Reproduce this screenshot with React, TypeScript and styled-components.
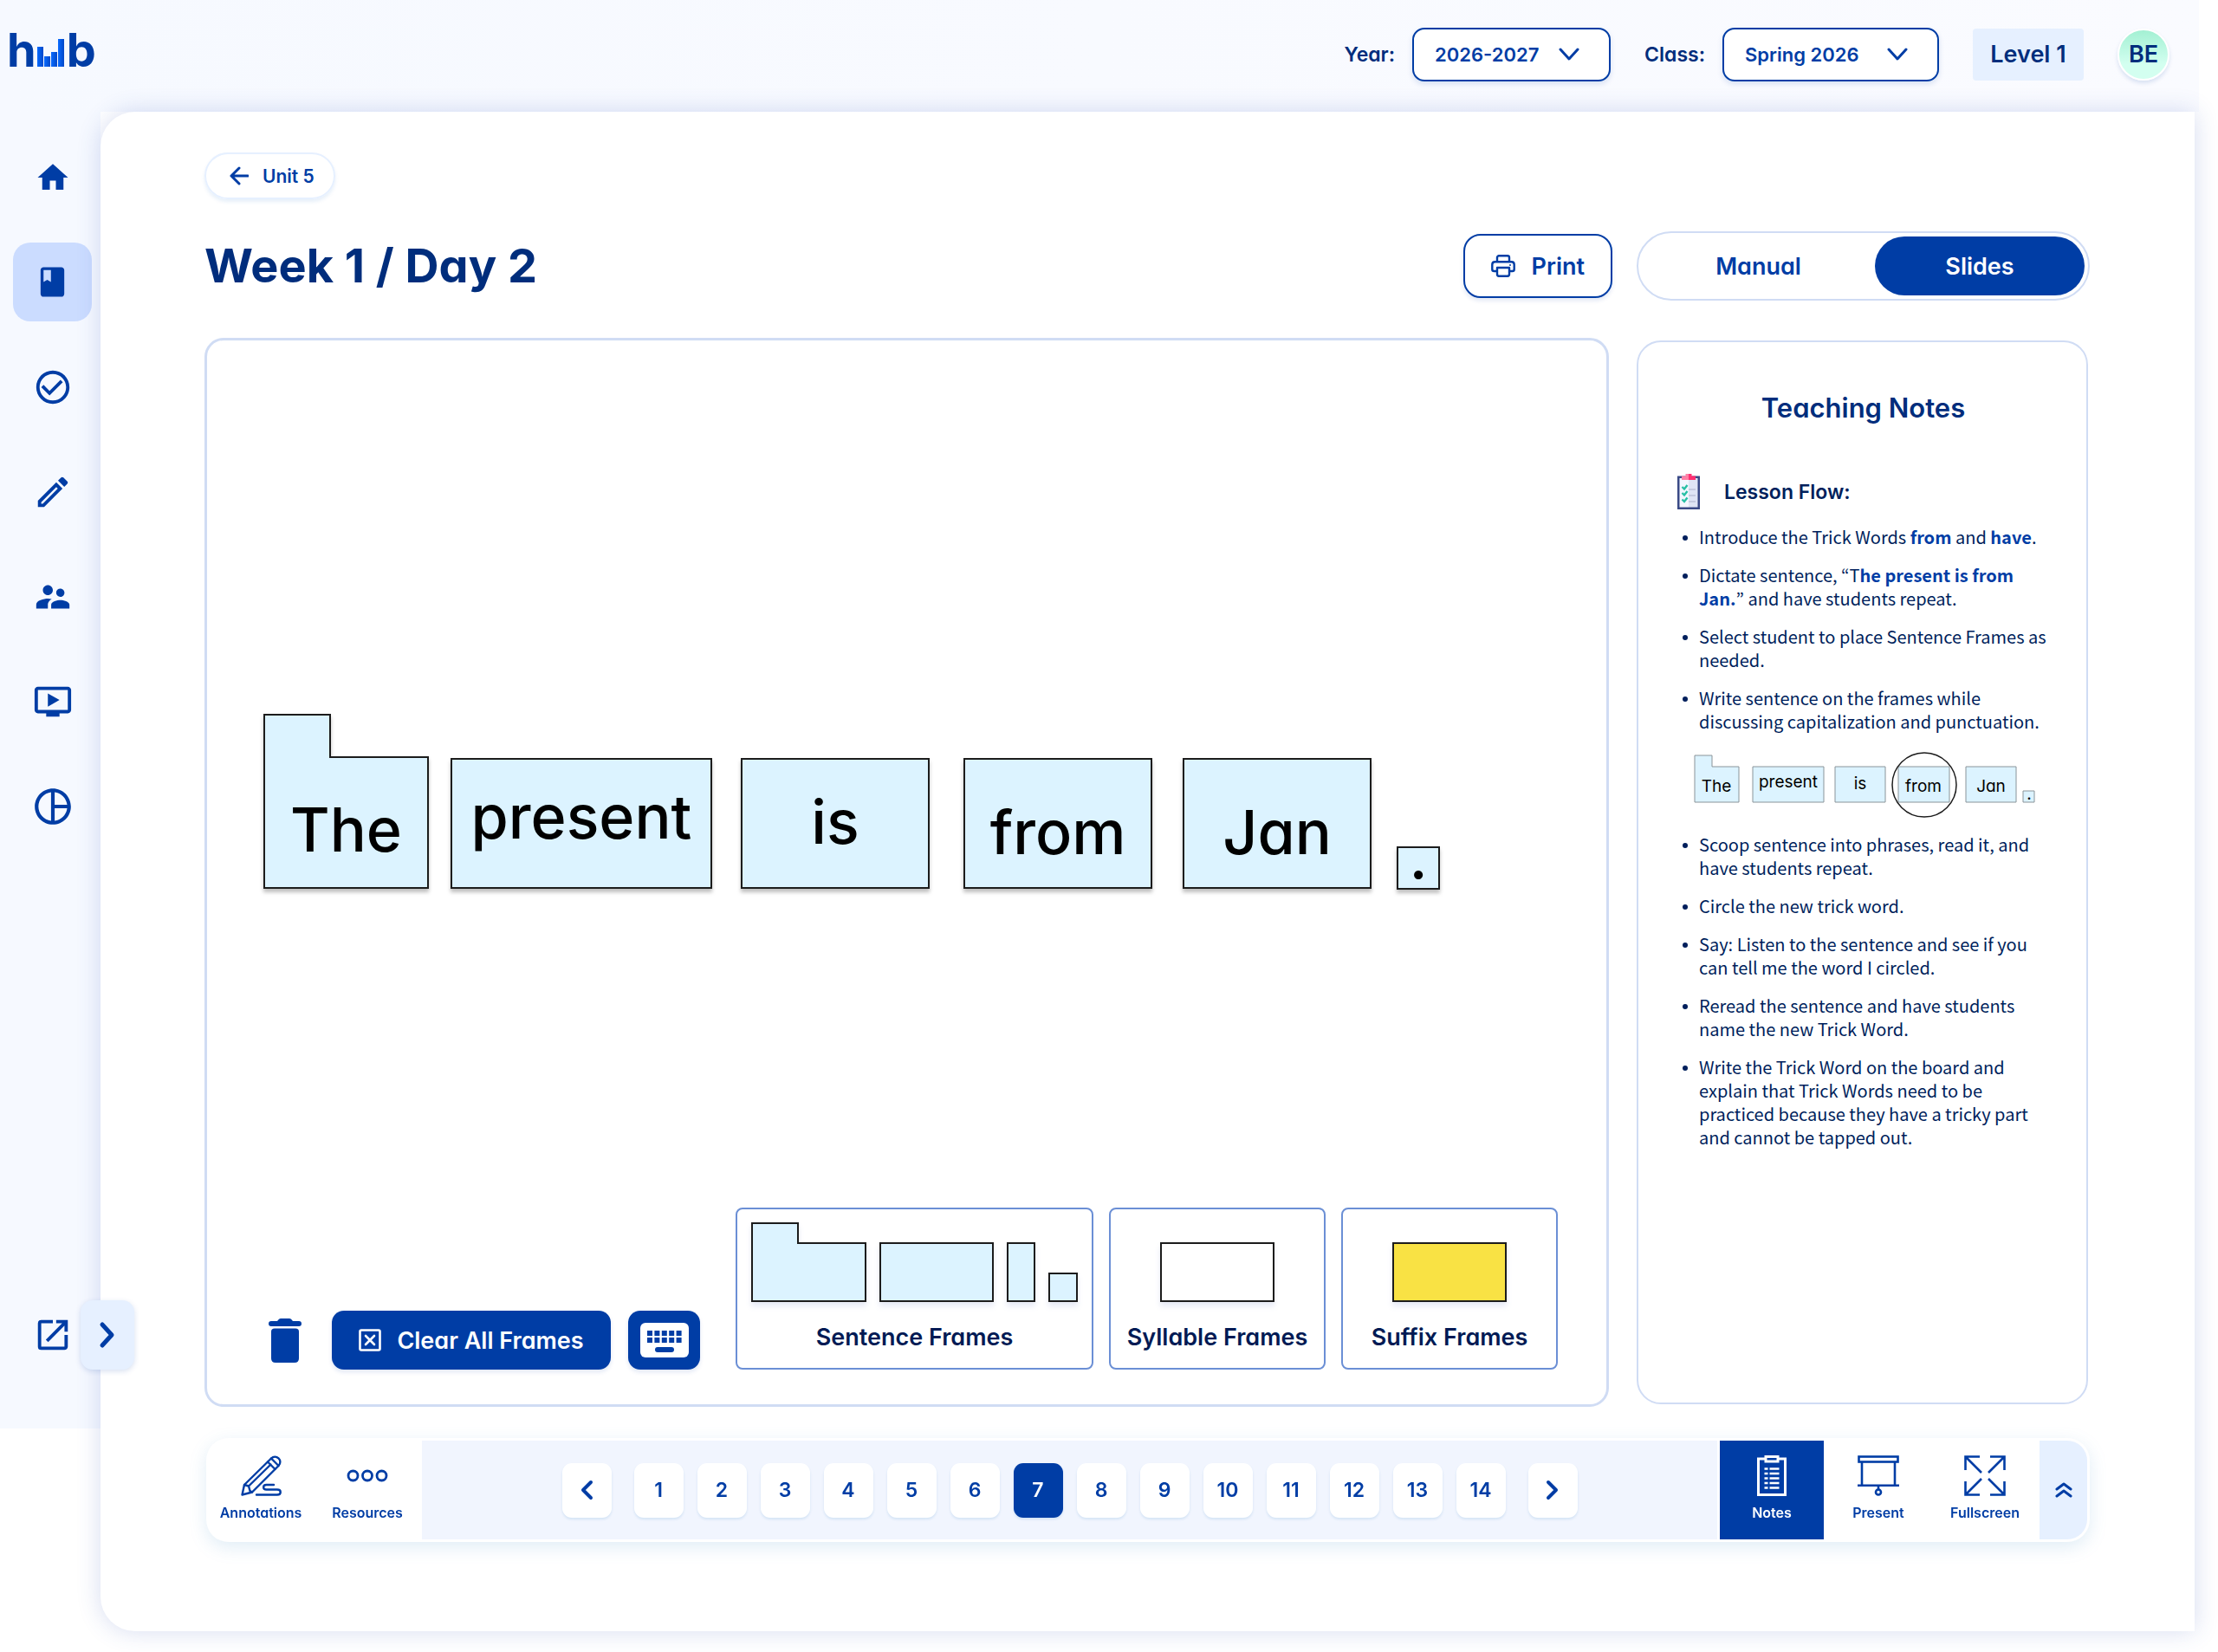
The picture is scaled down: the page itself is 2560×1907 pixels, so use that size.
import React, { useState } from "react";
import styled, { createGlobalStyle } from "styled-components";
import {
  MdHome,
  MdBook,
  MdCheckCircleOutline,
  MdOutlineModeEdit,
  MdSupervisorAccount,
  MdOutlineOndemandVideo,
  MdOutlinePieChart,
  MdOpenInNew,
} from "react-icons/md";

const color = {
  primary: "#003da5",
  navy: "#002d7c",
  ink: "#001f5c",
  tint: "#e6f0ff",
  line: "#d0dcf4",
  frame: "#dcf3ff",
  frameLine: "#1c1c1c",
};

const display = `Inter, "Open Sans", sans-serif`;

const GlobalStyle = createGlobalStyle`
  *, *::before, *::after { box-sizing: border-box; }
  body {
    margin: 0;
    background: #fff;
    color: ${color.ink};
    font-family: ${display};
    font-feature-settings: "cv11" 1;
  }
  button, select {
    font-family: inherit;
    font-feature-settings: inherit;
    cursor: pointer;
  }
  svg { display: block; }
  h1, h2, h3, p, ul { margin: 0; padding: 0; }
`;

const Page = styled.div`
  display: flex;
  flex-direction: column;
  min-height: 100vh;
  padding: 0 22px 24px 0;
`;

/* ---------- header ---------- */

const Header = styled.header`
  display: flex;
  align-items: center;
  justify-content: space-between;
  height: 129px;
  padding: 0 34px 4px 8px;
  background: linear-gradient(90deg, #f6f9ff, #fafbff);
`;

const Logo = styled.a`
  display: flex;
  align-items: flex-end;
  padding-bottom: 10px;
  color: ${color.primary};
  font-size: 54px;
  font-weight: 700;
  line-height: 54px;
  text-decoration: none;

  svg { margin-bottom: 8px; }
`;

const HeaderTools = styled.div`
  display: flex;
  align-items: center;
  gap: 39px;
`;

const Field = styled.div`
  display: flex;
  align-items: center;
  gap: 20px;
`;

const FieldLabel = styled.label`
  color: ${color.navy};
  font-size: 23px;
  font-weight: 600;
`;

const SelectBox = styled.div<{ $width: number }>`
  position: relative;
  width: ${(p) => p.$width}px;

  svg {
    position: absolute;
    top: 23px;
    right: 36px;
    pointer-events: none;
  }
`;

const Select = styled.select`
  width: 100%;
  height: 62px;
  padding: 0 24px;
  border: 2px solid ${color.primary};
  border-radius: 14px;
  background: #fff;
  box-shadow: 0 3px 6px rgba(0, 61, 165, 0.14);
  color: ${color.primary};
  font-size: 22px;
  font-weight: 600;
  appearance: none;
`;

const Level = styled.span`
  min-width: 128px;
  border-radius: 4px;
  background: ${color.tint};
  color: ${color.navy};
  font-size: 27px;
  font-weight: 600;
  line-height: 60px;
  text-align: center;
`;

const Avatar = styled.button`
  width: 60px;
  height: 60px;
  padding: 0;
  border: 2px solid #fff;
  border-radius: 50%;
  background: linear-gradient(#a3f0d3, #d3fff0 70%);
  box-shadow: 0 3px 5px rgba(0, 61, 165, 0.14);
  color: ${color.navy};
  font-size: 27px;
  font-weight: 600;
`;

/* ---------- shell ---------- */

const Shell = styled.div`
  display: grid;
  grid-template-columns: 116px minmax(0, 1fr);
  flex: 1;
`;

const Sidebar = styled.aside`
  position: relative;
  display: flex;
  flex-direction: column;
  justify-content: space-between;
  align-self: start;
  height: 1520px;
  max-height: 100%;
  padding: 30px 10px 63px 15px;
  background: #f6f9ff;
`;

const Nav = styled.nav`
  display: flex;
  flex-direction: column;
  gap: 30px;
`;

const NavLink = styled.a<{ $active?: boolean }>`
  display: flex;
  align-items: center;
  justify-content: center;
  height: 91px;
  border-radius: 20px;
  background: ${(p) => (p.$active ? "#cbdcff" : "transparent")};
  color: ${color.primary};
`;

const ExpandSidebar = styled.button`
  position: absolute;
  z-index: 2;
  bottom: 68px;
  left: 93px;
  display: grid;
  place-items: center;
  width: 62px;
  height: 80px;
  padding: 0;
  border: 0;
  border-radius: 14px;
  background: ${color.tint};
  box-shadow: 0 2px 6px rgba(0, 61, 165, 0.16);
`;

const Main = styled.main`
  position: relative;
  display: flex;
  flex-direction: column;
  margin-right: 5px;
  padding: 47px 121px 103px 120px;
  border-radius: 40px 0 0 40px;
  background: #fff;
  box-shadow: 0 0 28px rgba(50, 80, 180, 0.2);
`;

const BackLink = styled.a`
  display: flex;
  align-items: center;
  align-self: flex-start;
  gap: 16px;
  height: 54px;
  padding: 0 22px 0 27px;
  border: 2px solid ${color.tint};
  border-radius: 27px;
  box-shadow: 0 3px 4px rgba(0, 100, 200, 0.1);
  color: ${color.primary};
  font-size: 21px;
  font-weight: 600;
  text-decoration: none;
`;

const TitleRow = styled.div`
  display: flex;
  align-items: center;
  margin: 37px 0 43px;
`;

const Title = styled.h1`
  flex: 1;
  color: ${color.navy};
  font-size: 54px;
  font-weight: 700;
  line-height: 64px;
`;

const PrintButton = styled.button`
  display: flex;
  align-items: center;
  gap: 18px;
  height: 74px;
  margin-right: 28px;
  padding: 0 30px;
  border: 2px solid ${color.primary};
  border-radius: 20px;
  background: #fff;
  box-shadow: 0 3px 5px rgba(0, 61, 165, 0.12);
  color: ${color.primary};
  font-size: 27px;
  font-weight: 600;
`;

const Toggle = styled.div`
  display: grid;
  grid-template-columns: 1fr 242px;
  width: 523px;
  height: 80px;
  padding: 4px;
  border: 2px solid ${color.line};
  border-radius: 40px;
`;

const ToggleOption = styled.button<{ $on: boolean }>`
  border: 0;
  border-radius: 34px;
  background: ${(p) => (p.$on ? color.primary : "transparent")};
  color: ${(p) => (p.$on ? "#fff" : color.primary)};
  font-size: 27px;
  font-weight: 600;
`;

const Panels = styled.div`
  display: grid;
  grid-template-columns: minmax(0, 1fr) 523px;
  flex: 1;
  gap: 32px;
`;

/* ---------- board ---------- */

const Board = styled.section`
  position: relative;
  display: flex;
  flex-direction: column;
  justify-content: flex-end;
  padding: 40px 56px;
  border: 3px solid ${color.line};
  border-radius: 22px;
`;

const Tile = styled.div<{ $x: number; $y: number; $w: number; $h: number; $rise: number }>`
  position: absolute;
  left: ${(p) => p.$x}px;
  top: ${(p) => p.$y}px;
  display: flex;
  align-items: flex-end;
  justify-content: center;
  width: ${(p) => p.$w}px;
  height: ${(p) => p.$h}px;
  padding-bottom: ${(p) => p.$rise}px;
  color: #000;
  filter: drop-shadow(0 4px 2px rgba(0, 0, 0, 0.25));
  font-size: 70px;
  font-weight: 500;
  line-height: 72px;
`;

const TileShape = styled.svg`
  position: absolute;
  inset: 0;
  overflow: visible;
`;

const TileWord = styled.span`
  position: relative;
`;

const BoardTools = styled.div`
  display: flex;
  align-items: flex-end;
  justify-content: space-between;
`;

const Actions = styled.div`
  display: flex;
  align-items: center;
  gap: 20px;
  padding-left: 15px;
`;

const IconButton = styled.button`
  display: grid;
  place-items: center;
  width: 38px;
  height: 68px;
  margin-right: 15px;
  padding: 0;
  border: 0;
  background: none;
`;

const SolidButton = styled.button<{ $width: number }>`
  display: flex;
  align-items: center;
  justify-content: center;
  gap: 18px;
  width: ${(p) => p.$width}px;
  height: 68px;
  padding: 0;
  border: 0;
  border-radius: 14px;
  background: ${color.primary};
  box-shadow: 0 3px 5px rgba(0, 61, 165, 0.12);
  color: #fff;
  font-size: 27px;
  font-weight: 600;
`;

const FrameGroups = styled.div`
  display: flex;
  gap: 18px;
`;

const FrameGroup = styled.div<{ $width: number }>`
  display: flex;
  flex-direction: column;
  justify-content: space-between;
  width: ${(p) => p.$width}px;
  height: 187px;
  padding: 15px 0 18px;
  border: 2px solid #6b8fd5;
  border-radius: 8px;
`;

const FrameRow = styled.div`
  display: flex;
  align-items: flex-end;
  justify-content: center;
  gap: 15px;
  height: 92px;
  filter: drop-shadow(0 5px 3px rgba(60, 80, 180, 0.12));
`;

const FrameName = styled.h3`
  color: #001a54;
  font-size: 27px;
  font-weight: 600;
  line-height: 34px;
  text-align: center;
`;

/* ---------- notes ---------- */

const Notes = styled.section`
  margin: 3px 2px 3px 0;
  padding: 56px 43px 30px 45px;
  border: 2px solid ${color.line};
  border-radius: 28px;
`;

const NotesTitle = styled.h2`
  color: ${color.navy};
  font-size: 31px;
  font-weight: 600;
  line-height: 40px;
  text-align: center;
`;

const LessonHead = styled.div`
  display: flex;
  align-items: center;
  gap: 28px;
  margin-top: 56px;
`;

const LessonTitle = styled.h3`
  color: ${color.ink};
  font-size: 23px;
  font-weight: 600;
  line-height: 32px;
`;

const Steps = styled.ul`
  margin-top: 18px;
  padding-left: 25px;
  font-family: "Noto Sans CJK KR", "Noto Sans", sans-serif;
  font-size: 20px;
  line-height: 27px;
  list-style: none;
`;

const Step = styled.li`
  position: relative;
  margin-bottom: 17px;

  &::before {
    content: "";
    position: absolute;
    top: 12px;
    left: -19px;
    width: 6px;
    height: 6px;
    border-radius: 50%;
    background: ${color.ink};
  }

  strong { color: ${color.primary}; }
`;

const SentencePicture = styled.svg`
  margin: 22px 0 12px -6px;
  overflow: visible;
  font-family: ${display};
  font-size: 19px;
`;

/* ---------- slide bar ---------- */

const SlideBar = styled.footer`
  display: flex;
  gap: 3px;
  height: 120px;
  margin: 36px 0 0 2px;
  padding: 3px;
  overflow: hidden;
  border-radius: 26px;
  background: #fff;
`;

const SlideBarShadow = styled.div`
  border-radius: 26px;
  filter: drop-shadow(0 6px 10px rgba(0, 110, 180, 0.12));
`;

const BarButton = styled.button<{ $on?: boolean }>`
  display: flex;
  flex-direction: column;
  align-items: center;
  gap: 9px;
  width: 120px;
  padding: 17px 0 0;
  border: 0;
  background: ${(p) => (p.$on ? color.primary : "#fff")};
  color: ${(p) => (p.$on ? "#fff" : color.primary)};
  font-size: 16px;
  font-weight: 600;
  line-height: 20px;
`;

const Pager = styled.nav`
  display: flex;
  flex: 1;
  align-items: center;
  justify-content: center;
  gap: 26px;
  background: #f1f5fe;
`;

const PageList = styled.div`
  display: flex;
  gap: 16px;
`;

const PageButton = styled.button<{ $on?: boolean }>`
  display: grid;
  place-items: center;
  width: 57px;
  height: 63px;
  padding: 0;
  border: 0;
  border-radius: 11px;
  background: ${(p) => (p.$on ? color.primary : "#fff")};
  box-shadow: 0 2px 3px rgba(0, 110, 180, 0.12);
  color: ${(p) => (p.$on ? "#fff" : color.primary)};
  font-size: 23px;
  font-weight: 600;
`;

const CollapseButton = styled.button`
  display: grid;
  place-items: center;
  width: 55px;
  padding: 0;
  border: 0;
  border-radius: 0 23px 23px 0;
  background: ${color.tint};
`;

/* ---------- drawings ---------- */

type StrokeProps = { w: number; h: number; d: string; sw?: number; stroke?: string };

const Stroke = ({ w, h, d, sw = 3, stroke = color.primary }: StrokeProps) => (
  <svg
    width={w}
    height={h}
    viewBox={`0 0 ${w} ${h}`}
    fill="none"
    stroke={stroke}
    strokeWidth={sw}
    strokeLinecap="round"
    strokeLinejoin="round"
    aria-hidden="true"
  >
    <path d={d} />
  </svg>
);

const ChevronDown = () => <Stroke w={24} h={16} sw={3} d="M2 2l10 11L22 2" />;

const LogoBars = () => (
  <svg width="35" height="32" viewBox="0 0 35 32" aria-hidden="true">
    <defs>
      <linearGradient id="bar">
        <stop offset="0" stopColor="#0a6bff" />
        <stop offset="1" stopColor="#0048c8" />
      </linearGradient>
    </defs>
    <g fill="url(#bar)">
      <rect x="1" y="9" width="7" height="23" />
      <rect x="9" y="20" width="7" height="12" />
      <rect x="17" y="15" width="7" height="17" />
      <rect x="25" y="0" width="7" height="32" />
    </g>
  </svg>
);

const PrinterIcon = () => (
  <svg width="28" height="26" viewBox="0 0 28 26" fill="none" stroke={color.primary} strokeWidth="2.4" strokeLinejoin="round" aria-hidden="true">
    <path d="M7 8V3.2C7 2 8 1.3 9 1.3h10c1 0 2 .7 2 1.9V8" />
    <path d="M7 19H3.5C2.200 19 1.300 18.200 1.300 17V11.500C1.300 9.500 2.800 8.300 4.500 8.300h19c1.700 0 3.200 1.200 3.200 3.200V17c0 1.200-.9 2-2.200 2H21" />
    <path d="M7 15h14v7.500c0 1.300-.8 2.200-2 2.200H9c-1.200 0-2-.9-2-2.200z" />
    <circle cx="22" cy="12" r="1" fill={color.primary} stroke="none" />
  </svg>
);

const TrashIcon = () => (
  <svg width="38" height="51" viewBox="0 0 38 51" fill={color.primary} aria-hidden="true">
    <path d="M3 3h7l2-2.200Q13 0 14 0h10q1 0 2 .8L28 3h7q3 0 3 3t-3 3H3Q0 9 0 6t3-3z" />
    <path d="M3 15q0-3.500 4-3.500h24q4 0 4 3.500v31q0 5-5 5H8q-5 0-5-5z" />
  </svg>
);

const ClearIcon = () => (
  <svg width="26" height="26" viewBox="0 0 26 26" fill="none" stroke="#fff" strokeWidth="2.600" strokeLinecap="round" aria-hidden="true">
    <rect x="1.500" y="1.500" width="23" height="23" rx="1.500" />
    <path d="M8 8l10 10M18 8L8 18" />
  </svg>
);

const KeyboardIcon = () => (
  <svg width="56" height="40" viewBox="0 0 56 40" aria-hidden="true">
    <rect width="56" height="40" rx="6" fill="#fff" />
    <g fill={color.primary}>
      {[0, 1, 2, 3, 4].map((i) => (
        <React.Fragment key={i}>
          <rect x={8 + i * 8.4} y="9" width="6" height="6" />
          <rect x={8 + i * 8.4} y="17" width="6" height="6" />
        </React.Fragment>
      ))}
      <rect x="17" y="28" width="22" height="6" rx="3" />
    </g>
  </svg>
);

const ClipboardPicture = () => (
  <svg width="26" height="41" viewBox="0 0 26 41" aria-hidden="true">
    <path d="M0 2.500h26V41H0z" fill="#3a4a86" />
    <path d="M2.500 5H13v33.500H2.500z" fill="#f3f6ff" />
    <path d="M13 5h10.500v33.500H13z" fill="#dfe5f5" />
    <path d="M5 2.500h4.500V0H13v7H5z" fill="#ff7fa6" />
    <path d="M13 0h3.500v2.500H21V7h-8z" fill="#ff3071" />
    <g stroke="#c5cbe0" strokeWidth="2"><path d="M13 18h8M13 25h8M13 32h8" /></g>
    <g stroke="#27bfa5" strokeWidth="2.400" fill="none"><path d="M5.500 15l2.500 2.500L11.500 13M5.500 22l2.500 2.500 3.500-4.500M5.500 29.500L8 32l3.500-4.500" /></g>
  </svg>
);

const AnnotateIcon = () => (
  <svg width="47" height="47" viewBox="0 0 47 47" fill="none" stroke={color.primary} strokeWidth="2.400" strokeLinejoin="round" strokeLinecap="round" aria-hidden="true">
    <path d="M4 34L35 3.500C37.500 1 41 1 43.500 3.300s2.500 6 0 8.700L13 42.500 1.500 45.500z" />
    <path d="M4 34l5 1.500 1.500 5.500 2.500 1.500M31 7.500l8.500 8.500M35 3.500l8.500 8.500M9 35.500L34.500 10.500" />
    <path d="M38 34H29.500C25 34 25 39.500 29.500 39.500H42c5 0 5 6 0 6H18" />
  </svg>
);

const DotsIcon = () => (
  <svg width="48" height="47" viewBox="0 0 48 47" fill="none" stroke={color.primary} strokeWidth="2.800" aria-hidden="true">
    <circle cx="7.500" cy="23.500" r="5.500" />
    <circle cx="24" cy="23.500" r="5.500" />
    <circle cx="40.500" cy="23.500" r="5.500" />
  </svg>
);

const NotesIcon = () => (
  <svg width="34" height="47" viewBox="0 0 34 47" fill="none" stroke="#fff" strokeWidth="3" aria-hidden="true">
    <path d="M9 4H1.500v41.500h31V4H25" />
    <rect x="10" y="1.500" width="14" height="5.500" />
    <path d="M8.500 15.500h4M14.500 15.500h11M8.500 21h4M14.500 21h11M8.500 26.500h4M14.500 26.500h11M8.500 32h4M14.500 32h11M8.500 37.500h4M14.500 37.500h11" strokeWidth="2.600" />
  </svg>
);

const PresentIcon = () => (
  <svg width="48" height="47" viewBox="0 0 48 47" fill="none" stroke={color.primary} strokeWidth="2.600" aria-hidden="true">
    <rect x="1.500" y="1.500" width="45" height="6" />
    <path d="M5 8v26.500M43 8v26.500M0 34.800h48M24 35v4" />
    <circle cx="24" cy="42.500" r="3" />
  </svg>
);

const FullscreenIcon = () => (
  <svg width="48" height="47" viewBox="0 0 48 47" fill="none" stroke={color.primary} strokeWidth="2.600" aria-hidden="true">
    <path d="M1.500 17V1.500H18M2 2l18 18M30 1.500h16.500V17M46 2L28 20M1.500 30v15.500H18M2 45l18-18M30 45.500h16.500V30M46 45L28 27" />
  </svg>
);

const notched = (w: number, h: number, nx: number, ny: number) =>
  `M1 1H${nx}V${ny}H${w - 1}V${h - 1}H1Z`;
const plain = (w: number, h: number) => `M1 1H${w - 1}V${h - 1}H1Z`;

const FrameShape = ({ w, h, d, fill = color.frame }: { w: number; h: number; d?: string; fill?: string }) => (
  <svg width={w} height={h} viewBox={`0 0 ${w} ${h}`} aria-hidden="true">
    <path d={d ?? plain(w, h)} fill={fill} stroke={color.frameLine} strokeWidth="2" />
  </svg>
);

/* ---------- data ---------- */

const navItems = [
  { name: "Home", Icon: MdHome, size: 42 },
  { name: "Lessons", Icon: MdBook, size: 41 },
  { name: "Assessments", Icon: MdCheckCircleOutline, size: 46 },
  { name: "Practice", Icon: MdOutlineModeEdit, size: 46 },
  { name: "Students", Icon: MdSupervisorAccount, size: 46 },
  { name: "Videos", Icon: MdOutlineOndemandVideo, size: 46 },
  { name: "Reports", Icon: MdOutlinePieChart, size: 50 },
];

const tiles = [
  { word: "The", x: 65, y: 431, w: 191, h: 202, rise: 32, shape: notched(191, 202, 77, 50) },
  { word: "present", x: 281, y: 482, w: 302, h: 151, rise: 47 },
  { word: "is", x: 616, y: 482, w: 218, h: 151, rise: 41 },
  { word: "from", x: 873, y: 482, w: 218, h: 151, rise: 29 },
  { word: "Jan", x: 1126, y: 482, w: 218, h: 151, rise: 29 },
  { word: ".", x: 1373, y: 584, w: 50, h: 50, rise: 2 },
];

const pages = Array.from({ length: 14 }, (_, i) => i + 1);

const pictureTiles = [
  { word: "The", x: 1, w: 51, cx: 26, base: 46 },
  { word: "present", x: 68, w: 82, cx: 109, base: 41 },
  { word: "is", x: 163, w: 58, cx: 192, base: 43 },
  { word: "from", x: 236, w: 59, cx: 265, base: 46 },
  { word: "Jan", x: 314, w: 58, cx: 343, base: 46 },
];

export default function App() {
  const [page, setPage] = useState(7);
  const [view, setView] = useState("Slides");

  return (
    <>
      <GlobalStyle />
      <Page>
        <Header>
          <Logo href="#" aria-label="hub">
            <span>h</span>
            <LogoBars />
            <span>b</span>
          </Logo>
          <HeaderTools>
            <Field>
              <FieldLabel htmlFor="year">Year:</FieldLabel>
              <SelectBox $width={229}>
                <Select id="year">
                  <option>2026-2027</option>
                </Select>
                <ChevronDown />
              </SelectBox>
            </Field>
            <Field>
              <FieldLabel htmlFor="class">Class:</FieldLabel>
              <SelectBox $width={250}>
                <Select id="class">
                  <option>Spring 2026</option>
                </Select>
                <ChevronDown />
              </SelectBox>
            </Field>
            <Level>Level 1</Level>
            <Avatar>BE</Avatar>
          </HeaderTools>
        </Header>

        <Shell>
          <Sidebar>
            <Nav>
              {navItems.map(({ name, Icon, size }) => (
                <NavLink key={name} href="#" aria-label={name} $active={name === "Lessons"}>
                  <Icon size={size} />
                </NavLink>
              ))}
            </Nav>
            <NavLink href="#" aria-label="Open in new window">
              <MdOpenInNew size={46} />
            </NavLink>
            <ExpandSidebar aria-label="Expand menu">
              <Stroke w={20} h={32} sw={5} d="M4 4l11 12L4 28" />
            </ExpandSidebar>
          </Sidebar>

          <Main>
            <BackLink href="#">
              <Stroke w={22} h={22} sw={3} d="M21 11H2M11 2l-9 9 9 9" />
              Unit 5
            </BackLink>

            <TitleRow>
              <Title>Week 1 / Day 2</Title>
              <PrintButton>
                <PrinterIcon />
                Print
              </PrintButton>
              <Toggle>
                {["Manual", "Slides"].map((name) => (
                  <ToggleOption
                    key={name}
                    $on={view === name}
                    aria-pressed={view === name}
                    onClick={() => setView(name)}
                  >
                    {name}
                  </ToggleOption>
                ))}
              </Toggle>
            </TitleRow>

            <Panels>
              <Board>
                {tiles.map((t) => (
                  <Tile key={t.word} $x={t.x} $y={t.y} $w={t.w} $h={t.h} $rise={t.rise}>
                    <TileShape width={t.w} height={t.h} aria-hidden="true">
                      <path d={t.shape ?? plain(t.w, t.h)} fill={color.frame} stroke={color.frameLine} strokeWidth="2" />
                    </TileShape>
                    <TileWord>{t.word}</TileWord>
                  </Tile>
                ))}

                <BoardTools>
                  <Actions>
                    <IconButton aria-label="Delete">
                      <TrashIcon />
                    </IconButton>
                    <SolidButton $width={322}>
                      <ClearIcon />
                      Clear All Frames
                    </SolidButton>
                    <SolidButton $width={83} aria-label="Keyboard">
                      <KeyboardIcon />
                    </SolidButton>
                  </Actions>
                  <FrameGroups>
                    <FrameGroup $width={413}>
                      <FrameRow>
                        <FrameShape w={133} h={92} d={notched(133, 92, 54, 24)} />
                        <FrameShape w={132} h={69} />
                        <FrameShape w={33} h={69} />
                        <FrameShape w={34} h={34} />
                      </FrameRow>
                      <FrameName>Sentence Frames</FrameName>
                    </FrameGroup>
                    <FrameGroup $width={250}>
                      <FrameRow>
                        <FrameShape w={132} h={69} fill="#fff" />
                      </FrameRow>
                      <FrameName>Syllable Frames</FrameName>
                    </FrameGroup>
                    <FrameGroup $width={250}>
                      <FrameRow>
                        <FrameShape w={132} h={69} fill="#f9e244" />
                      </FrameRow>
                      <FrameName>Suffix Frames</FrameName>
                    </FrameGroup>
                  </FrameGroups>
                </BoardTools>
              </Board>

              <Notes>
                <NotesTitle>Teaching Notes</NotesTitle>
                <LessonHead>
                  <ClipboardPicture />
                  <LessonTitle>Lesson Flow:</LessonTitle>
                </LessonHead>
                <Steps>
                  <Step>
                    Introduce the Trick Words <strong>from</strong> and <strong>have</strong>.
                  </Step>
                  <Step>
                    Dictate sentence, “T<strong>he present is from Jan.</strong>” and have students repeat.
                  </Step>
                  <Step>Select student to place Sentence Frames as needed.</Step>
                  <Step>
                    Write sentence on the frames while discussing capitalization and punctuation.
                    <SentencePicture width="396" height="76" viewBox="0 0 396 76">
                      {pictureTiles.map((t) => (
                        <g key={t.word}>
                          <path
                            d={
                              t.word === "The"
                                ? "M1 4H21V17H52V58H1Z"
                                : `M${t.x} 17h${t.w}v41h${-t.w}Z`
                            }
                            fill={color.frame}
                            stroke="#8a9499"
                          />
                          <text x={t.cx} y={t.base} textAnchor="middle" fill="#000">
                            {t.word}
                          </text>
                        </g>
                      ))}
                      <path d="M380 45h13v13h-13Z" fill={color.frame} stroke="#8a9499" />
                      <text x="387" y="55" textAnchor="middle">.</text>
                      <circle cx="266" cy="38" r="37" fill="none" stroke="#1c1c1c" strokeWidth="1.500" />
                    </SentencePicture>
                  </Step>
                  <Step>Scoop sentence into phrases, read it, and have students repeat.</Step>
                  <Step>Circle the new trick word.</Step>
                  <Step>Say: Listen to the sentence and see if you can tell me the word I circled.</Step>
                  <Step>Reread the sentence and have students name the new Trick Word.</Step>
                  <Step>
                    Write the Trick Word on the board and explain that Trick Words need to be practiced
                    because they have a tricky part and cannot be tapped out.
                  </Step>
                </Steps>
              </Notes>
            </Panels>

            <SlideBarShadow>
              <SlideBar>
                <BarButton>
                  <AnnotateIcon />
                  Annotations
                </BarButton>
                <BarButton>
                  <DotsIcon />
                  Resources
                </BarButton>
                <Pager aria-label="Slides">
                  <PageButton aria-label="Previous slide" onClick={() => setPage(Math.max(1, page - 1))}>
                    <Stroke w={16} h={24} sw={4} d="M13 3L4 12l9 9" />
                  </PageButton>
                  <PageList>
                    {pages.map((n) => (
                      <PageButton key={n} $on={n === page} onClick={() => setPage(n)}>
                        {n}
                      </PageButton>
                    ))}
                  </PageList>
                  <PageButton aria-label="Next slide" onClick={() => setPage(Math.min(14, page + 1))}>
                    <Stroke w={16} h={24} sw={4} d="M3 3l9 9-9 9" />
                  </PageButton>
                </Pager>
                <BarButton $on>
                  <NotesIcon />
                  Notes
                </BarButton>
                <BarButton>
                  <PresentIcon />
                  Present
                </BarButton>
                <BarButton>
                  <FullscreenIcon />
                  Fullscreen
                </BarButton>
                <CollapseButton aria-label="Collapse bar">
                  <Stroke w={20} h={18} sw={3} d="M2 8l8-6 8 6M2 16l8-6 8 6" />
                </CollapseButton>
              </SlideBar>
            </SlideBarShadow>
          </Main>
        </Shell>
      </Page>
    </>
  );
}
